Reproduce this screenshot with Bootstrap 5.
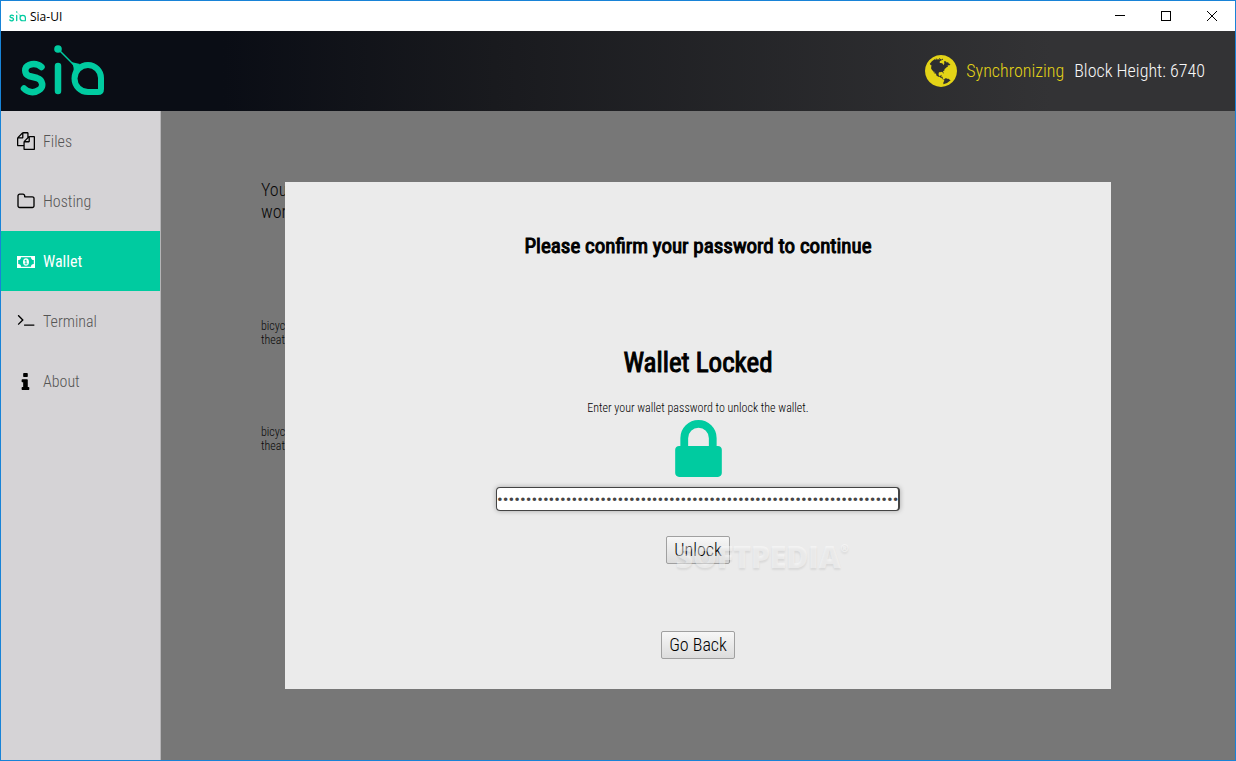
<!DOCTYPE html>
<html lang="en">
<head>
<meta charset="utf-8">
<meta name="viewport" content="width=device-width, initial-scale=1">
<title>Sia-UI</title>
<link href="https://cdn.jsdelivr.net/npm/bootstrap@5.3.0/dist/css/bootstrap.min.css" rel="stylesheet">
<style>
:root { --sia: #00cba0; }
body { font-family: "Roboto Condensed", Roboto, sans-serif; font-weight: 300; color: #000; line-height: 1.2; }
.app-window { border: 1px solid #1883d7; }
.titlebar { height: 30px; background: #fff; font: 400 12px "Open Sans", "Noto Sans", sans-serif; padding-left: 8px; }
.titlebar button { width: 46px; height: 30px; border: 0; background: none; padding: 0; display: grid; place-items: center; }
.app-header { height: 80px; padding: 0 30px 0 19px; background: linear-gradient(90deg, #0a0d15 18%, #191a1e 40%, #333335 85%); font-size: 18px; }
.app-header .syncing { color: #e3d317; margin: 0 10px 0 9px; }
.height-info { color: #f8f8f8; }
.sidebar { width: 160px; background: #d5d3d6; border-right: 1px solid #b5b4b6; }
.sidebar a { height: 60px; padding: 2px 0 0 16px; gap: 8px; color: #555; font-size: 16px; text-decoration: none; }
.sidebar a svg { color: #000; }
.sidebar a.active, .sidebar a.active svg { color: #fff; }
.sidebar a.active { background: var(--sia); font-weight: 400; }
.content { background: #777; }
.page-text { padding: 68px 100px; color: #080808; }
.page-text .intro { font-size: 18px; line-height: 22px; margin-bottom: 96px; }
.page-text .seed { font-size: 12px; line-height: 14px; margin-bottom: 78px; }
.dialog-panel { width: 77%; background: #ebebeb; padding: 52px 16px 30px; }
.dialog-panel h1, .dialog-panel h2 { font-weight: 400; -webkit-text-stroke: 1px #000; }
.dialog-panel h1 { font-size: 21px; line-height: 24px; margin-bottom: 89px; }
.dialog-panel h2 { font-size: 27px; line-height: 32px; margin-bottom: 22px; }
.dialog-panel label { font-size: 12px; line-height: 14px; margin-bottom: 5px; }
.password { width: 404px; max-width: 100%; height: 24px; margin: 10px 0 25px; padding: 0; border: 1px solid #444; border-right-width: 2px; border-radius: 4px; background: #fff; color: #444; font-size: 17px; box-shadow: 0 0 5px rgba(0,0,0,.3); outline: 0; }
.dialog-panel button { height: 28px; padding: 0 7px; border: 1px solid #a0a0a0; border-radius: 2px; background: linear-gradient(#f7f7f7, #dcdcdc); color: #000; font-size: 18px; font-weight: 300; line-height: 24px; }
.unlock { margin-bottom: 67px; }
.watermark { left: 100%; top: 1px; margin-left: -54px; font: 800 30px/40px "Open Sans", sans-serif; color: rgba(255,255,255,.45); text-shadow: 0 2px 2px rgba(0,0,0,.08); pointer-events: none; }
.watermark sup { font-size: 10px; top: -16px; }
</style>
</head>
<body>
<svg class="d-none">
  <symbol id="sia-mark" viewBox="0 0 84 52">
    <g fill="none" stroke="#00cba0" stroke-linecap="round" stroke-linejoin="round">
      <path stroke-width="6.5" d="M21.500 22C18 19 13 18.500 9 20C4 22 4 29 9 31L17 33C23 35 24 42 19 45C14 48.500 8 47.500 4 43.500M38 21V46"/>
      <path stroke-width="6" d="M68 20A13.500 13.500 0 1 0 68 47H78Q81 47 81 44V33A13 13 0 0 0 68 20Z"/>
      <path stroke-width="1.5" d="M38 4L56 22"/>
    </g>
    <circle cx="38" cy="4" r="3.800" fill="#00cba0"/>
    <path fill="#00cba0" d="M51 17L60 19L53 29Q55 22 51 17Z"/>
  </symbol>
</svg>
<div class="app-window d-flex flex-column min-vh-100">
  <div class="titlebar d-flex align-items-center">
    <svg width="17" height="11"><use href="#sia-mark"/></svg>
    <span class="ms-1 me-auto">Sia-UI</span>
    <button type="button" aria-label="Minimize"><svg width="10" height="10" shape-rendering="crispEdges"><path stroke="#000" d="M0 4.500H10"/></svg></button>
    <button type="button" aria-label="Maximize"><svg width="10" height="10" shape-rendering="crispEdges"><path fill="none" stroke="#000" d="M.5.5H9.500V9.500H.5Z"/></svg></button>
    <button type="button" aria-label="Close"><svg width="10" height="10"><path stroke="#000" d="M0 0L10 10M10 0L0 10"/></svg></button>
  </div>
  <header class="app-header d-flex align-items-center">
    <svg class="me-auto" width="84" height="52"><use href="#sia-mark"/></svg>
    <svg width="32" height="32" viewBox="128 128 1536 1536" fill="#e3d317"><path d="M896 128q209 0 385.500 103t279.500 279.500 103 385.500-103 385.500-279.500 279.500-385.500 103-385.500-103-279.500-279.500-103-385.500 103-385.500 279.500-279.500 385.500-103zm274 521q-2 1-9.500 9.500t-13.500 9.500q2 0 4.500-5t5-11 3.500-7q6-7 22-15 14-6 52-12 34-8 51 11-2-2 9.500-13t14.500-12q3-2 15-4.500t15-7.500l2-22q-12 1-17.500-7t-6.500-21q0 2-6 8 0-7-4.500-8t-11.500 1-9 1q-10-3-15-7.500t-8-16.500-4-15q-2-5-9.500-11t-9.500-10q-1-2-2.500-5.500t-3-6.500-4-5.500-5.500-2.500-7 5-7.500 10-4.500 5q-3-2-6-1.500t-4.500 1-4.500 3-5 3.500q-3 2-8.500 3t-8.500 2q15-5-1-11-10-4-16-3 9-4 7.500-12t-8.500-14h5q-1-4-8.500-8.500t-17.500-8.500-13-6q-8-5-34-9.500t-33-.5q-5 6-4.500 10.500t4 14 3.500 12.500q1 6-5.500 13t-6.500 12q0 7 14 15.500t10 21.500q-3 8-16 16t-16 12q-5 8-1.500 18.500t10.500 16.500q2 2 1.500 4t-3.500 4.500-5.500 4-6.500 3.500l-3 2q-11 5-20.500-6t-13.500-26q-7-25-16-30-23-8-29 1-5-13-41-26-25-9-58-4 6-1 0-15-7-15-19-12 3-6 4-17.500t1-13.500q3-13 12-23 1-1 7-8.500t9.500-13.500.5-6q35 4 50-11 5-5 11.500-17t10.500-17q9-6 14-5.500t14.500 5.500 14.500 5q14 1 15.500-11t-7.500-20q12 1 3-17-4-7-8-9-12-4-27 5-8 4 2 8-1-1-9.500 10.500t-16.500 17.500-16-5q-1-1-5.500-13.500t-9.500-13.500q-8 0-16 15 3-8-11-15t-24-8q19-12-8-27-7-4-20.500-5t-19.500 4q-5 7-5.500 11.500t5 8 10.500 5.500 11.500 4 8.500 3q14 10 8 14-2 1-8.500 3.500t-11.500 4.500-6 4q-3 4 0 14t-2 14q-5-5-9-17.500t-7-16.500q7 9-25 6l-10-1q-4 0-16 2t-20.500 1-13.500-8q-4-8 0-20 1-4 4-2-4-3-11-9.500t-10-8.500q-46 15-94 41 6 1 12-1 5-2 13-6.500t10-5.500q34-14 42-7l5-5q14 16 20 25-7-4-30-1-20 6-22 12 7 12 5 18-4-3-11.500-10t-14.500-11-15-5q-16 0-22 1-146 80-235 222 7 7 12 8 4 1 5 9t2.500 11 11.500-3q9 8 3 19 1-1 44 27 19 17 21 21 3 11-10 18-1-2-9-9t-9-4q-3 5 .5 18.500t10.500 12.500q-7 0-9.500 16t-2.500 35.500-1 23.500l2 1q-3 12 5.500 34.500t21.500 19.500q-13 3 20 43 6 8 8 9 3 2 12 7.500t15 10 10 10.500q4 5 10 22.500t14 23.500q-2 6 9.500 20t10.500 23q-1 0-2.500 1t-2.500 1q3 7 15.500 14t15.500 13q1 3 2 10t3 11 8 2q2-20-24-62-15-25-17-29-3-5-5.500-15.500t-4.500-14.500q2 0 6 1.500t8.500 3.500 7.500 4 2 3q-3 7 2 17.500t12 18.500 17 19 12 13q6 6 14 19.500t0 13.500q9 0 20 10.500t17 19.500q5 8 8 26t5 24q2 7 8.500 13.500t12.500 9.500l16 8 13 7q5 2 18.500 10.500t21.500 11.500q10 4 16 4t14.500-2.500 13.500-3.500q15-2 29 15t21 21q36 19 55 11-2 1 .5 7.500t8 15.500 9 14.500 5.500 8.500q5 6 18 15t18 15q6-4 7-9-3 8 7 20t18 10q14-3 14-32-31 15-49-18 0-1-2.500-5.500t-4-8.500-2.500-8.500 0-7.500 5-3q9 0 10-3.500t-2-12.500-4-13q-1-8-11-20t-12-15q-5 9-16 8t-16-9q0 1-1.500 5.500t-1.500 6.500q-13 0-15-1 1-3 2.500-17.500t3.500-22.500q1-4 5.500-12t7.500-14.500 4-12.500-4.500-9.500-17.500-2.500q-19 1-26 20-1 3-3 10.500t-5 11.500-9 7q-7 3-24 2t-24-5q-13-8-22.500-29t-9.500-37q0-10 2.500-26.500t3-25-5.500-24.500q3-2 9-9.500t10-10.500q2-1 4.500-1.500t4.500 0 4-1.500 3-6q-1-1-4-3-3-3-4-3 7 3 28.500-1.500t27.500 1.500q15 11 22-2 0-1-2.500-9.500t-.5-13.500q5 27 29 9 3 3 15.500 5t17.500 5q3 2 7 5.500t5.500 4.500 5-.5 8.500-6.500q10 14 12 24 11 40 19 44 7 3 11 2t4.500-9.500 0-14-1.500-12.500l-1-8v-18l-1-8q-15-3-18.500-12t1.500-18.500 15-18.500q1-1 8-3.500t15.500-6.500 12.500-8q21-19 15-35 7 0 11-9-1 0-5-3t-7.500-5-4.500-2q9-5 2-16 5-3 7.500-11t7.500-10q9 12 21 2 7-8 1-16 5-7 20.500-10.500t18.500-9.500q7 2 8-2t1-12 3-12q4-5 15-9t13-5l17-11q3-4 0-4 18 2 31-11 10-11-6-20 3-6-3-9.500t-15-5.500q3-1 11.500-.5t10.500-1.500q15-10-7-16-17-5-43 12zm-163 877q206-36 351-189-3-3-12.500-4.500t-12.500-3.500q-18-7-24-8 1-7-2.500-13t-8-9-12.500-8-11-7q-2-2-7-6t-7-5.500-7.500-4.500-8.500-2-10 1l-3 1q-3 1-5.500 2.500t-5.500 3-4 3 0 2.500q-21-17-36-22-5-1-11-5.500t-10.500-7-10-1.500-11.500 7q-5 5-6 15t-2 13q-7-5 0-17.500t2-18.500q-3-6-10.500-4.500t-12 4.500-11.500 8.500-9 6.500-8.500 5.500-8.500 7.500q-3 4-6 12t-5 11q-2-4-11.500-6.500t-9.500-5.500q2 10 4 35t5 38q7 31-12 48-27 25-29 40-4 22 12 26 0 7-8 20.500t-7 21.500q0 6 2 16z"/></svg>
    <span class="syncing">Synchronizing</span>
    <span class="height-info">Block Height: 6740</span>
  </header>
  <div class="d-flex flex-grow-1">
    <nav class="sidebar flex-shrink-0">
      <a href="#files" class="d-flex align-items-center"><svg width="18" height="18" viewBox="0 90 1792 1792" overflow="visible" fill="currentColor"><path d="M1696 384q40 0 68 28t28 68v1216q0 40-28 68t-68 28h-960q-40 0-68-28t-28-68v-288h-544q-40 0-68-28t-28-68v-672q0-40 20-88t48-76l408-408q28-28 76-48t88-20h416q40 0 68 28t28 68v328q68-40 128-40h416zm-544 213l-299 299h299v-299zm-640-384l-299 299h299v-299zm196 647l316-316v-416h-384v416q0 40-28 68t-68 28h-416v640h512v-256q0-40 20-88t48-76zm956 804v-1152h-384v416q0 40-28 68t-68 28h-416v640h896z"/></svg>Files</a>
      <a href="#hosting" class="d-flex align-items-center"><svg width="18" height="18" viewBox="32 80 1728 1728" fill="currentColor"><path d="M1600 1312v-704q0-40-28-68t-68-28h-704q-40 0-68-28t-28-68v-64q0-40-28-68t-68-28h-320q-40 0-68 28t-28 68v960q0 40 28 68t68 28h1216q40 0 68-28t28-68zm128-704v704q0 92-66 158t-158 66h-1216q-92 0-158-66t-66-158v-960q0-92 66-158t158-66h320q92 0 158 66t66 158v32h672q92 0 158 66t66 158z"/></svg>Hosting</a>
      <a href="#wallet" class="d-flex align-items-center active" aria-current="page"><svg width="18" height="12" viewBox="0 0 18 12"><path fill="currentColor" fill-rule="evenodd" d="M0 0H18V12H0ZM4 1.200A2.800 2.800 0 0 1 1.200 4V8A2.800 2.800 0 0 1 4 10.800H14A2.800 2.800 0 0 1 16.800 8V4A2.800 2.800 0 0 1 14 1.200ZM9 2.200C10.900 2.200 12 3.800 12 6S10.900 9.800 9 9.800S6 8.200 6 6S7.100 2.200 9 2.200ZM8.600 3.700L7.400 4.800L8 5.400L8.500 5V7.500H7.600V8.300H10.400V7.500H9.500V3.700Z"/></svg>Wallet</a>
      <a href="#terminal" class="d-flex align-items-center"><svg width="18" height="18" viewBox="0 270 1792 1792" fill="currentColor"><path d="M649 983l-466 466q-10 10-23 10t-23-10l-50-50q-10-10-10-23t10-23l393-393-393-393q-10-10-10-23t10-23l50-50q13-10 23-10t23 10l466 466q10 10 10 23t-10 23zm1079 457v64q0 14-9 23t-23 9h-960q-14 0-23-9t-9-23v-64q0-14 9-23t23-9h960q14 0 23 9t9 23z"/></svg>Terminal</a>
      <a href="#about" class="d-flex align-items-center"><svg width="18" height="18" viewBox="190 120 1500 1500" fill="currentColor"><path d="M1216 1344v128q0 26-19 45t-45 19h-512q-26 0-45-19t-19-45v-128q0-26 19-45t45-19h64v-384h-64q-26 0-45-19t-19-45v-128q0-26 19-45t45-19h384q26 0 45 19t19 45v576h64q26 0 45 19t19 45zm-128-1152v192q0 26-19 45t-45 19h-256q-26 0-45-19t-19-45v-192q0-26 19-45t45-19h256q26 0 45 19t19 45z"/></svg>About</a>
    </nav>
    <main class="content flex-grow-1 position-relative">
      <div class="page-text">
        <p class="intro">You<br>wor</p>
        <p class="seed">bicyc<br>theat</p>
        <p class="seed">bicyc<br>theat</p>
      </div>
      <div class="position-absolute top-0 start-0 w-100 h-100 d-flex align-items-center justify-content-center">
        <form class="dialog-panel d-flex flex-column align-items-center" onsubmit="return false">
          <h1>Please confirm your password to continue</h1>
          <h2>Wallet Locked</h2>
          <label for="pw">Enter your wallet password to unlock the wallet.</label>
          <svg width="47" height="57" viewBox="320 128 1152 1408" fill="#00cba0"><path d="M640 768h512v-192q0-106-75-181t-181-75-181 75-75 181v192zm832 96v576q0 40-28 68t-68 28h-960q-40 0-68-28t-28-68v-576q0-40 28-68t68-28h32v-192q0-184 132-316t316-132 316 132 132 316v192h32q40 0 68 28t28 68z"/></svg>
          <input class="password" id="pw" type="password" value="aaaaaaaaaaaaaaaaaaaaaaaaaaaaaaaaaaaaaaaaaaaaaaaaaaaaaaaaaaaaaaaaaaaaaa">
          <div class="unlock position-relative">
            <button type="submit" class="d-block">Unlock</button>
            <span class="watermark position-absolute text-nowrap">SOFTPEDIA<sup>®</sup></span>
          </div>
          <button type="button">Go Back</button>
        </form>
      </div>
    </main>
  </div>
</div>
<script src="https://cdn.jsdelivr.net/npm/bootstrap@5.3.0/dist/js/bootstrap.bundle.min.js"></script>
</body>
</html>
